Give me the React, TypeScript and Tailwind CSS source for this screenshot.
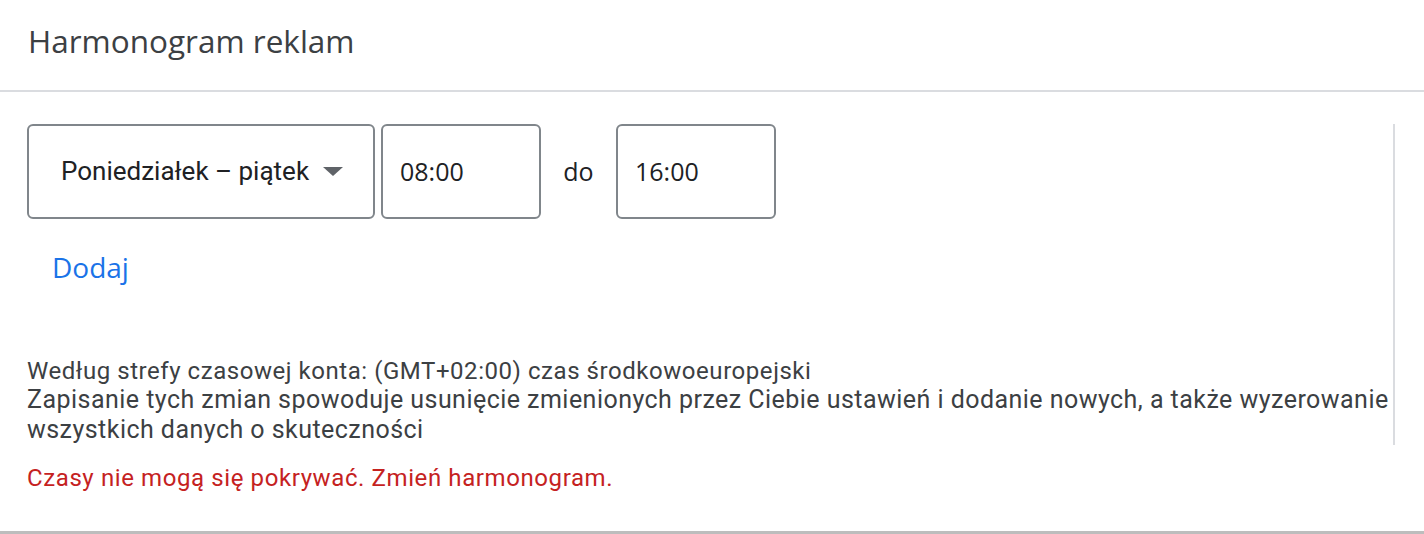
export default function App() {
  return (
    <div className="w-[1424px] h-[534px] bg-white overflow-hidden flex flex-col font-['Roboto','Liberation_Sans',sans-serif]">
      {/* Header */}
      <div className="h-[92px] shrink-0 border-b-2 border-[#dadce0] px-7 pt-[21px]">
        <h1 className="text-[31.5px] leading-[40px] text-[#3c4043] font-['Open_Sans',sans-serif]">Harmonogram reklam</h1>
      </div>

      <div className="pl-[27px] pt-[32px]">
        <div className="w-[1368px] border-r-2 border-[#dadce0]">
          {/* Day + hours row */}
          <div className="flex items-center">
            <button className="w-[348px] h-[95px] border-2 border-[#80868b] rounded-[6px] flex items-center pl-[32px] text-[26px] text-[#202124]">
              <span>Poniedziałek – piątek</span>
              <svg width="20" height="9" viewBox="0 0 20 9" className="ml-[14px]">
                <path d="M0 0 L20 0 L10 9 Z" fill="#5f6368" />
              </svg>
            </button>
            <div className="ml-[6px] w-[160px] h-[95px] border-2 border-[#80868b] rounded-[6px] flex items-center pl-[17px] text-[25px] text-[#202124] font-['Open_Sans',sans-serif]">
              08:00
            </div>
            <span className="w-[75px] text-center text-[25px] text-[#202124] font-['Open_Sans',sans-serif]">do</span>
            <div className="w-[160px] h-[95px] border-2 border-[#80868b] rounded-[6px] flex items-center pl-[17px] text-[25px] text-[#202124] font-['Open_Sans',sans-serif]">
              16:00
            </div>
          </div>

          {/* Add */}
          <div className="mt-[32px] pl-[25px]">
            <button className="text-[28px] leading-[32px] font-medium text-[#1a73e8] font-['Open_Sans',sans-serif]">Dodaj</button>
          </div>

          {/* Info */}
          <p className="mt-[72px] text-[24px] leading-[28px] tracking-[0.55px] text-[#3c4043]">
            Według strefy czasowej konta: (GMT+02:00) czas środkowoeuropejski
          </p>
          <p className="text-[25px] leading-[30px] tracking-[0.46px] text-[#3c4043] pr-[2px]">
            Zapisanie tych zmian spowoduje usunięcie zmienionych przez Ciebie ustawień i dodanie nowych, a także wyzerowanie wszystkich danych o skuteczności
          </p>
        </div>

        <p className="mt-[19px] text-[24px] leading-[28px] tracking-[0.6px] text-[#c5221f]">
          Czasy nie mogą się pokrywać. Zmień harmonogram.
        </p>
      </div>

      <div className="mt-auto h-[3px] shrink-0 bg-[#bdbdbd]" />
    </div>
  );
}
